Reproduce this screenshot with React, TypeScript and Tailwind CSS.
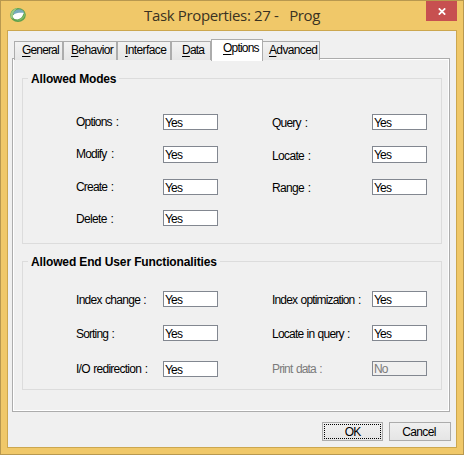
import React from "react";

type FieldProps = {
  label: string;
  value?: string;
  labelClass?: string;
  boxClass?: string;
  side?: "left" | "right";
  disabled?: boolean;
};

function Field({ label, value = "Yes", labelClass = "", boxClass = "h-4", side = "left", disabled = false }: FieldProps) {
  return (
    <div className={`flex items-start ${side === "left" ? "w-[196px]" : "w-[155px]"} ${disabled ? "text-[#7b7b7b]" : "text-black"}`}>
      <span className={`h-4 shrink-0 whitespace-pre ${side === "left" ? "w-[87px]" : "w-[100px]"} ${labelClass}`}>{label}</span>
      <div className={`w-[55px] shrink-0 border border-[#828790] pl-[1px] tracking-[-0.8px] ${disabled ? "bg-[#f0f0f0] leading-[14px]" : "bg-white"} ${boxClass}`}>
        {value}
      </div>
    </div>
  );
}

function Group({ title, titleClass, className, children }: { title: string; titleClass: string; className: string; children: React.ReactNode }) {
  return (
    <section className={`w-[420px] border border-[#dcdcdc] ${className}`}>
      <h2 className={`-mt-[8px] ml-[5px] h-4 whitespace-nowrap bg-[#f0f0f0] pl-[3px] font-bold text-black ${titleClass}`}>{title}</h2>
      <div className="pl-[53px]">{children}</div>
    </section>
  );
}

function Tab({ name, className }: { name: string; className: string }) {
  return (
    <div className={`h-[19px] shrink-0 whitespace-nowrap border border-b-0 border-[#acacac] bg-linear-to-b from-[#f2f2f2] to-[#e6e6e6] leading-[17px] ${className}`}>
      <span className="underline underline-offset-2">{name[0]}</span>
      {name.slice(1)}
    </div>
  );
}

export default function App() {
  return (
    <div className="flex h-[455px] w-[464px] flex-col border border-[#b8984f] bg-[#f0c869] font-['Liberation_Sans',sans-serif] text-[12px] leading-[16px] text-black">
      <header className="flex h-[29px] shrink-0 items-start">
        <svg className="mt-[6px] ml-[8px] shrink-0" width="17" height="16" viewBox="0 0 17 16">
          <ellipse cx="9" cy="8" rx="7.8" ry="7" fill="#5fa04d" />
          <path d="M1.8 10.5C.8 6 3.5 1.8 8.5 1.3C5 4 3.5 7 3.7 12Z" fill="#9bcb84" />
          <path d="M5 5C7 1.6 12 1 14.7 4.4L15 7H4Z" fill="#78aabc" />
          <path d="M3.8 8.4C6.2 6 10 5.6 14.6 5.8C14 9.7 10.8 13 7 12.3C4.8 11.8 3.6 10.6 3.8 8.4Z" fill="#fff" />
          <path d="M15.7 4.5C16 8 12.5 12.5 7.5 13.3C13 14.8 17.6 9 15.7 4.5Z" fill="#83bd67" />
        </svg>
        <h1 className="ml-[118px] w-[282px] whitespace-pre pt-[3px] font-['Open_Sans',sans-serif] text-[15px] leading-[22px] tracking-[-0.35px] text-[#3a3222]">{"Task Properties: 27 -   Prog"}</h1>
        <button aria-label="Close" className="flex h-5 w-[31px] shrink-0 justify-center bg-[#c75050] pt-[7px]">
          <svg width="8" height="7" viewBox="0 0 8 7">
            <path d="M.8 .3L7.2 6.7M7.2 .3L.8 6.7" stroke="#fff" strokeWidth="1.7" />
          </svg>
        </button>
      </header>

      <main className="ml-[6px] h-[418px] w-[450px] shrink-0 border border-[#cca74f] bg-[#f0f0f0]">
        <nav className="relative z-10 flex h-[29px] items-end pl-[6px]">
          <Tab name="General" className="w-[49px] pl-[7px] tracking-[-0.85px]" />
          <Tab name="Behavior" className="w-[54px] pl-[7px] tracking-[-0.65px]" />
          <Tab name="Interface" className="w-[54px] pl-[7px] tracking-[-0.6px]" />
          <Tab name="Data" className="w-[40px] pl-[10px] tracking-[-0.8px]" />
          <div className="-mb-[1px] h-[22px] w-[52px] shrink-0 border border-b-0 border-[#acacac] bg-white pl-[11px] leading-[17px] tracking-[-0.8px]">
            <span className="underline underline-offset-2">O</span>ptions
          </div>
          <Tab name="Advanced" className="-ml-[1px] w-[58px] pl-[6px] tracking-[-0.65px]" />
        </nav>

        <div className="-mt-[2px] ml-[4px] h-[354px] w-[438px] border border-[#acacac] bg-[#f0f0f0] shadow-[inset_0_0_0_1px_#fff]">
          <div className="pl-[9px] pt-[19px]">
            <Group title="Allowed Modes" titleClass="w-[91px] tracking-[-0.15px]" className="h-[166px]">
              <div className="mt-[27px] flex h-8">
                <Field label="Options :" labelClass="tracking-[-0.8px] [word-spacing:1.5px]" />
                <Field side="right" label="Query :" labelClass="pt-[1px] tracking-[-0.8px] [word-spacing:1.5px]" />
              </div>
              <div className="flex h-[33px]">
                <Field label="Modify :" labelClass="tracking-[-0.8px] [word-spacing:2px]" boxClass="h-[17px]" />
                <Field side="right" label="Locate :" labelClass="pt-[2px] tracking-[-0.65px] [word-spacing:1px]" boxClass="h-[17px]" />
              </div>
              <div className="flex h-[31px]">
                <Field label="Create :" labelClass="tracking-[-0.8px] [word-spacing:1px]" />
                <Field side="right" label="Range :" labelClass="pt-[1px] tracking-[-0.65px] [word-spacing:1px]" />
              </div>
              <Field label="Delete :" labelClass="pt-[1px] tracking-[-0.65px] [word-spacing:1px]" />
            </Group>

            <Group title="Allowed End User Functionalities" titleClass="w-[192px] tracking-[-0.13px]" className="mt-[17px] h-[129px]">
              <div className="mt-[21px] flex h-[34px]">
                <Field label="Index change :" labelClass="pt-[1px] tracking-[-0.7px] [word-spacing:0.5px]" />
                <Field side="right" label="Index optimization :" labelClass="pt-[1px] tracking-[-0.85px] [word-spacing:1px]" />
              </div>
              <div className="flex h-[36px]">
                <Field label="Sorting :" labelClass="pt-[1px] tracking-[-0.85px] [word-spacing:1px]" />
                <Field side="right" label="Locate in query :" labelClass="pt-[1px] tracking-[-0.75px] [word-spacing:0.5px]" />
              </div>
              <div className="flex">
                <Field label="I/O redirection :" labelClass="tracking-[-0.75px] [word-spacing:1px]" />
                <Field side="right" label="Print data :" value="No" disabled labelClass="tracking-[-0.85px] [word-spacing:1px]" boxClass="h-[15px]" />
              </div>
            </Group>
          </div>
        </div>

        <footer className="flex gap-[6px] pt-[10px] pl-[314px]">
          <button className="h-[19px] w-[61px] border border-[#acacac] bg-linear-to-b from-[#f0f0f0] to-[#e5e5e5] p-[1px]">
            <span className="block h-[15px] border border-dotted border-black leading-[14px] tracking-[-0.8px]">OK</span>
          </button>
          <button className="h-[19px] w-[62px] border border-[#acacac] bg-linear-to-b from-[#f0f0f0] to-[#e5e5e5] pr-[2px] leading-[18px] tracking-[-0.65px]">Cancel</button>
        </footer>
      </main>
    </div>
  );
}
